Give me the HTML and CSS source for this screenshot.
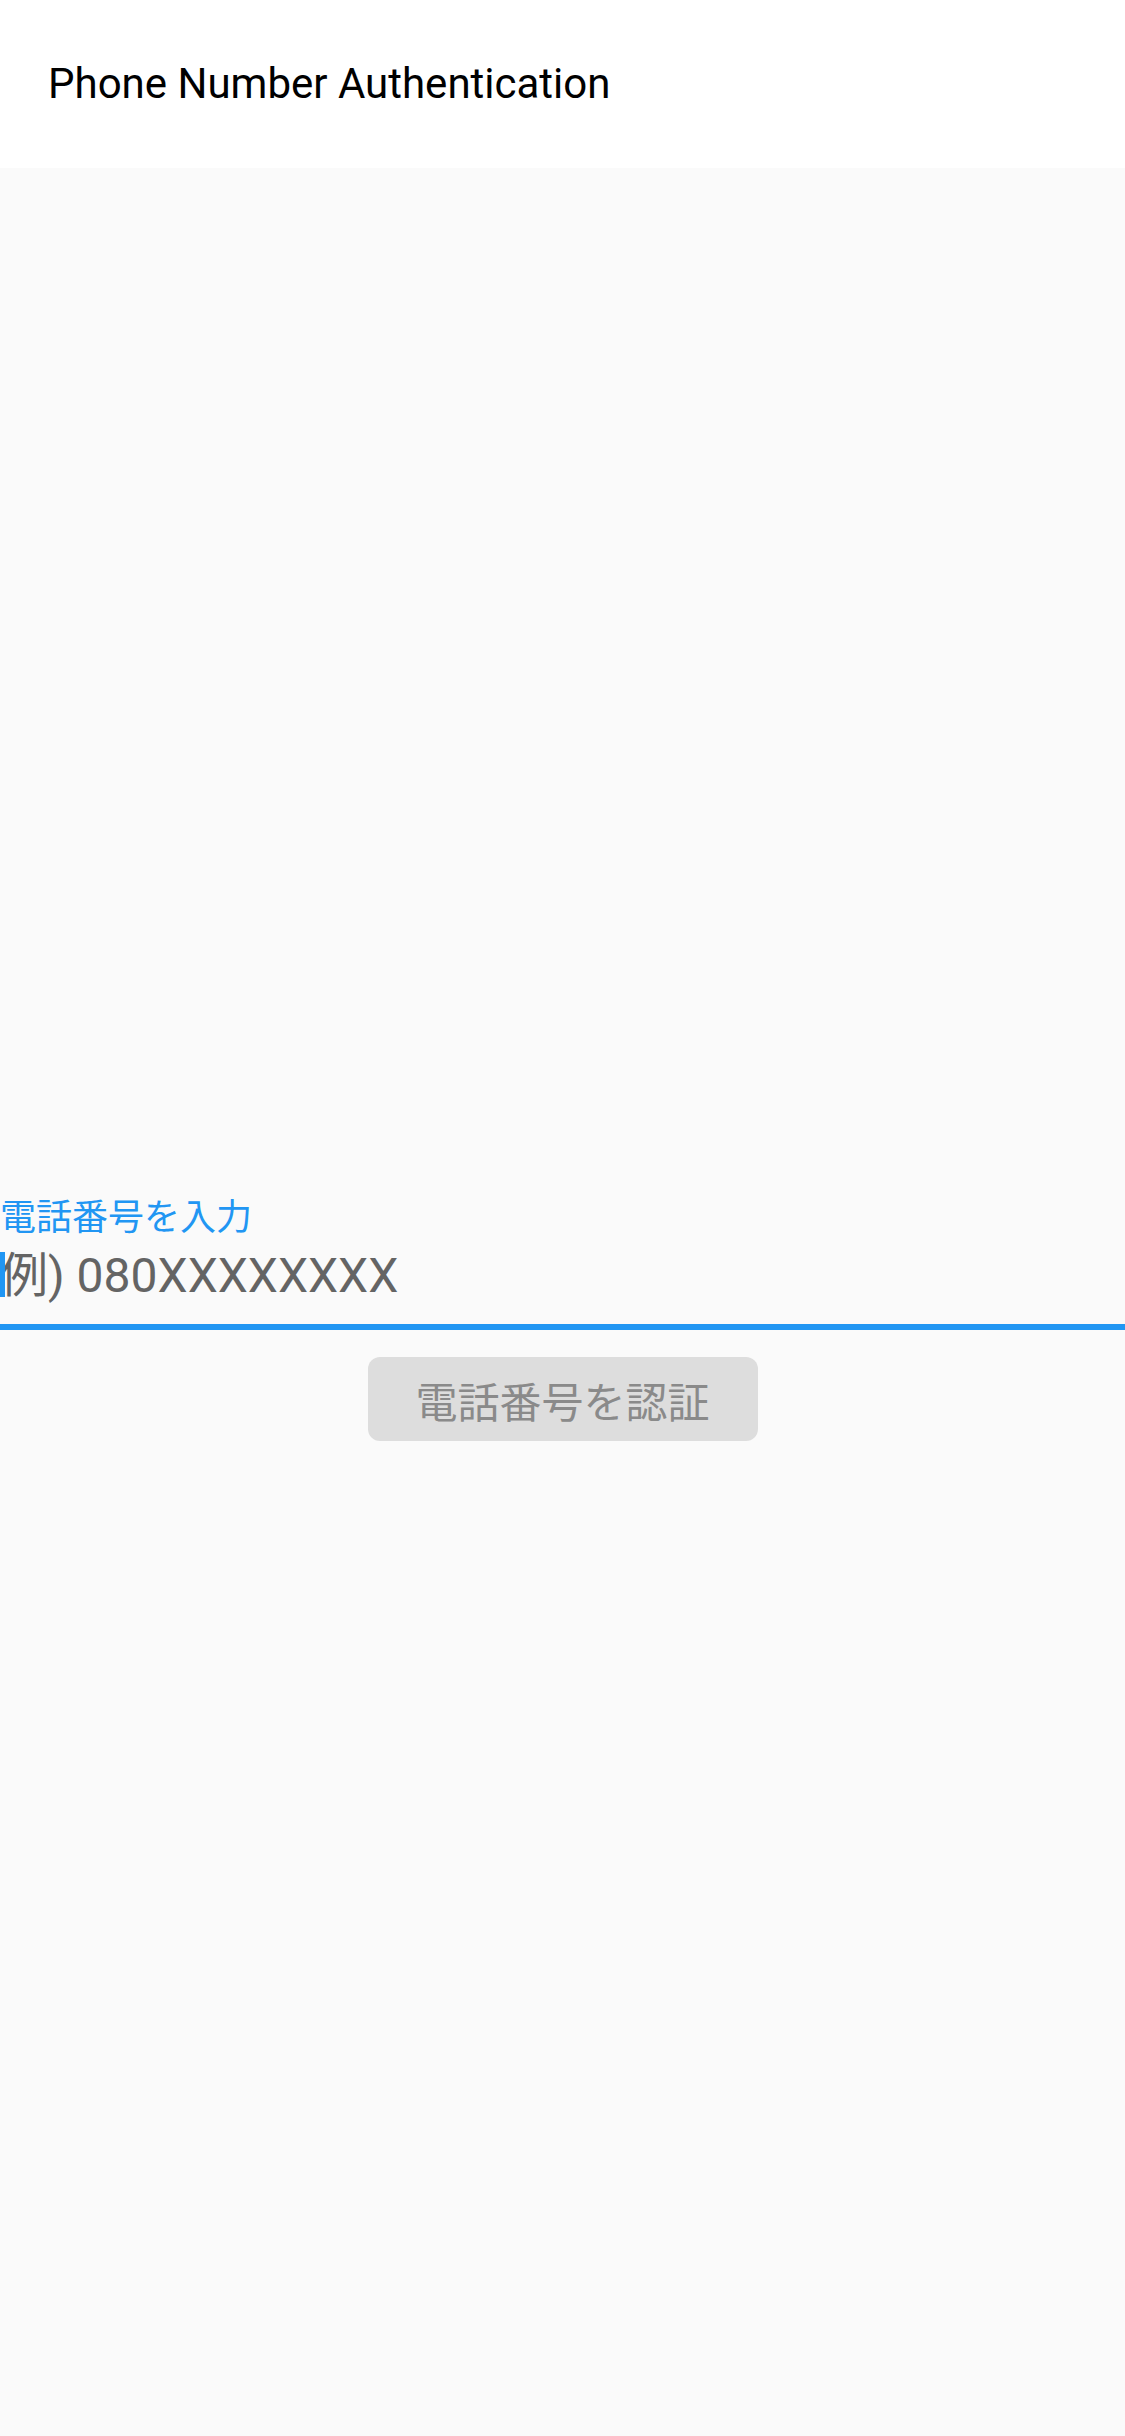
FILE: index.html
```html
<!DOCTYPE html>
<html lang="ja">
<head>
<meta charset="utf-8">
<title>Phone Number Authentication</title>
<link rel="stylesheet" href="styles.css">
</head>
<body>
<header class="appbar">
  <h1 class="title">Phone Number Authentication</h1>
</header>
<main class="content">
  <div class="field">
    <label class="label">電話番号を入力</label>
    <div class="input-row"><span class="hint">例) 080XXXXXXXX</span><span class="cursor"></span></div>
    <div class="underline"></div>
  </div>
  <button class="btn" disabled>電話番号を認証</button>
</main>
</body>
</html>
```

FILE: styles.css
```css
html, body {
  margin: 0;
  padding: 0;
}
body {
  width: 1125px;
  height: 2436px;
  background: #fafafa;
  font-family: Roboto, "Noto Sans CJK JP", sans-serif;
  overflow: hidden;
}
.appbar {
  height: 168px;
  background: #ffffff;
  display: flex;
  align-items: center;
  padding-left: 48px;
  box-sizing: border-box;
}
.title {
  margin: 0;
  font-size: 42px;
  font-weight: 400;
  color: #000000;
  line-height: 1;
}
.content {
  display: flex;
  flex-direction: column;
  padding-top: 1028px;
}
.field {
  display: flex;
  flex-direction: column;
}
.label {
  font-family: "Noto Sans CJK JP", sans-serif;
  font-size: 36px;
  line-height: 36px;
  color: #2196f3;
}
.input-row {
  position: relative;
  margin-top: 16px;
  height: 56px;
  display: flex;
  align-items: flex-start;
}
.cursor {
  position: absolute;
  left: 0;
  top: 4px;
  width: 5px;
  height: 45px;
  background: #2196f3;
}
.hint {
  font-family: Roboto, "Noto Sans CJK JP", sans-serif;
  font-size: 48px;
  line-height: 56px;
  color: #646464;
}
.underline {
  margin-top: 20px;
  height: 6px;
  background: #2196f3;
}
.btn {
  align-self: center;
  margin-top: 27px;
  width: 390px;
  height: 84px;
  border: none;
  border-radius: 12px;
  background: #dddddd;
  color: #8a8a8a;
  font-family: "Noto Sans CJK JP", sans-serif;
  font-size: 42px;
  padding: 0;
}
```
